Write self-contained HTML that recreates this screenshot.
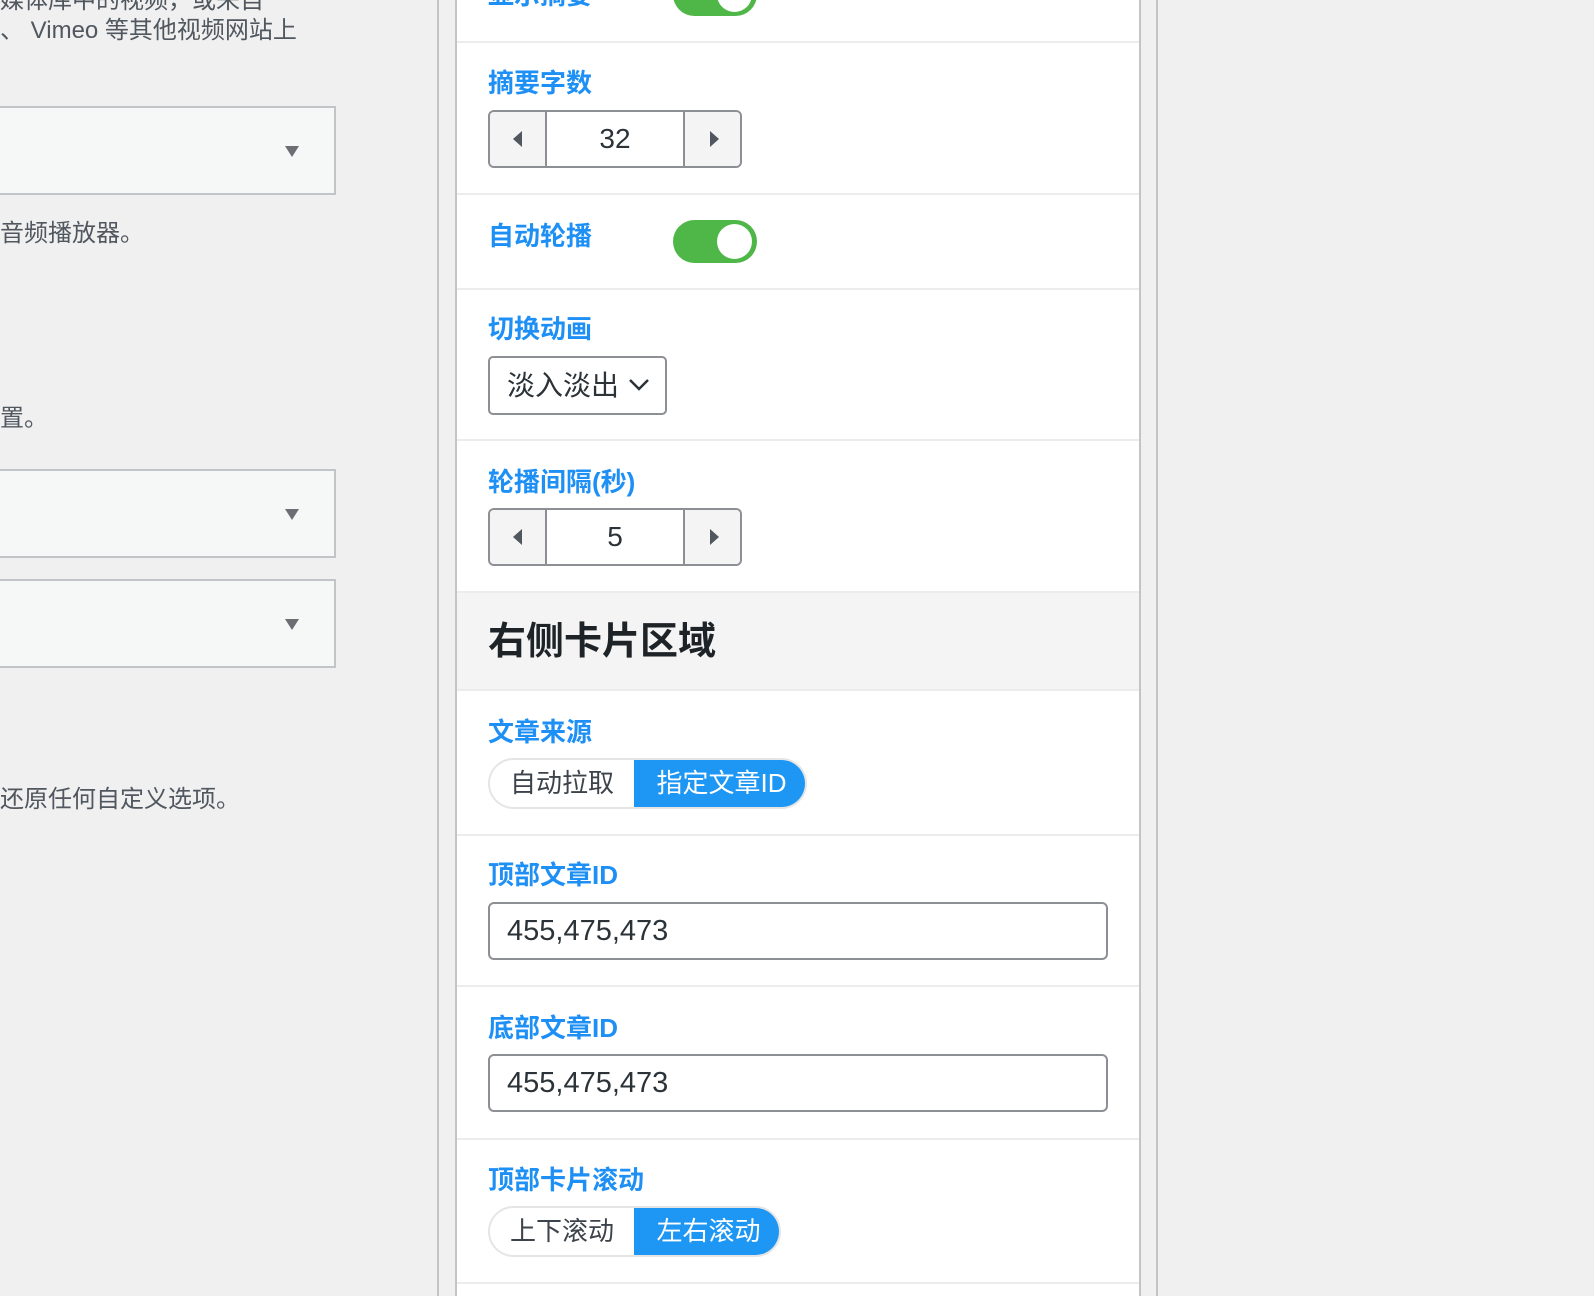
<!DOCTYPE html>
<html><head><meta charset="utf-8">
<style>
*{box-sizing:border-box;margin:0;padding:0}
body{width:1594px;height:1296px;overflow:hidden;background:#f0f0f1;position:relative;font-family:"Liberation Sans","Noto Sans CJK SC",sans-serif}
.a{position:absolute}
.lt{position:absolute;left:0;color:#50575e;font-size:24px;white-space:nowrap;line-height:30px}
.sel{position:absolute;left:-5px;width:341px;background:#f6f7f7;border:2px solid #c3c4c7}
.sel:after{content:"";position:absolute;left:288px;top:50%;margin-top:-5px;border-left:7px solid transparent;border-right:7px solid transparent;border-top:11px solid #6b6f73}
.lbl{position:absolute;left:488px;color:#1e90f5;font-size:26px;font-weight:bold;line-height:30px;white-space:nowrap}
.hr{position:absolute;left:457px;width:682px;height:2px;background:#ececec}
.num{position:absolute;left:488px;width:254px;height:58px;border:2px solid #8c8f94;border-radius:6px;overflow:hidden;background:#fff}
.num .b{position:absolute;top:0;width:57px;height:100%;background:#f4f4f4}
.num .l{left:0;border-right:2px solid #8c8f94}
.num .r{right:0;border-left:2px solid #8c8f94}
.num .v{position:absolute;left:57px;right:57px;top:0;height:100%;text-align:center;line-height:54px;font-size:28px;color:#2c3338}
.tl{position:absolute;top:50%;margin-top:-8px;border-top:8px solid transparent;border-bottom:8px solid transparent}
.tog{position:absolute;left:673px;width:84px;height:43px;border-radius:22px;background:#4fb748}
.tog:after{content:"";position:absolute;right:5px;top:4px;width:35px;height:35px;border-radius:50%;background:#fff}
.seg{position:absolute;left:488px;height:51px;border-radius:26px;border:2px solid #e5e5e5;overflow:hidden;font-size:26px;line-height:47px;white-space:nowrap}
.seg span{position:absolute;top:-2px;height:51px;line-height:51px;text-align:center}
.inp{position:absolute;left:488px;width:620px;height:58px;border:2px solid #8c8f94;border-radius:6px;background:#fff;font-size:29px;color:#2c3338;line-height:54px;padding-left:17px}
</style></head><body>
<div class="lt" style="top:-14px">媒体库中的视频，或来自</div>
<div class="lt" style="top:16px">、 Vimeo 等其他视频网站上</div>
<div class="sel" style="top:106px;height:89px"></div>
<div class="lt" style="top:219px">音频播放器。</div>
<div class="lt" style="top:404px">置。</div>
<div class="sel" style="top:469px;height:89px"></div>
<div class="sel" style="top:579px;height:89px"></div>
<div class="lt" style="top:785px">还原任何自定义选项。</div>

<div class="a" style="left:437px;top:0;width:2px;height:1296px;background:#c3c4c7"></div>
<div class="a" style="left:1156px;top:0;width:2px;height:1296px;background:#c3c4c7"></div>
<div class="a" style="left:455px;top:0;width:686px;height:1296px;background:#fff;border-left:2px solid #c3c4c7;border-right:2px solid #c3c4c7"></div>

<div class="lbl" style="top:-20px">显示摘要</div>
<div class="tog" style="top:-27px"></div>
<div class="hr" style="top:41px"></div>

<div class="lbl" style="top:68px">摘要字数</div>
<div class="num" style="top:110px"><div class="b l"><div class="tl" style="left:23px;border-right:9px solid #50575e"></div></div><div class="v">32</div><div class="b r"><div class="tl" style="left:25px;border-left:9px solid #50575e"></div></div></div>
<div class="hr" style="top:193px"></div>

<div class="lbl" style="top:221px">自动轮播</div>
<div class="tog" style="top:220px"></div>
<div class="hr" style="top:288px"></div>

<div class="lbl" style="top:314px">切换动画</div>
<div class="a" style="left:488px;top:356px;width:179px;height:59px;border:2px solid #8c8f94;border-radius:5px;font-size:28px;line-height:55px;padding-left:17px;color:#2c3338;white-space:nowrap">淡入淡出
<svg class="a" style="left:138px;top:20px" width="22" height="14" viewBox="0 0 22 14"><path d="M2 2 L11 11 L20 2" fill="none" stroke="#2c3338" stroke-width="2.5"/></svg></div>
<div class="hr" style="top:439px"></div>

<div class="lbl" style="top:467px">轮播间隔(秒)</div>
<div class="num" style="top:508px"><div class="b l"><div class="tl" style="left:23px;border-right:9px solid #50575e"></div></div><div class="v">5</div><div class="b r"><div class="tl" style="left:25px;border-left:9px solid #50575e"></div></div></div>

<div class="a" style="left:457px;top:591px;width:682px;height:100px;background:#f4f4f4;border-top:2px solid #ececec;border-bottom:2px solid #ececec"></div>
<div class="a" style="left:488px;top:620px;font-size:38px;font-weight:bold;color:#1d2327;line-height:44px;white-space:nowrap">右侧卡片区域</div>

<div class="lbl" style="top:717px">文章来源</div>
<div class="seg" style="top:758px;width:319px"><span style="left:0;width:144px;color:#3c434a">自动拉取</span><span style="left:144px;width:175px;background:#1e96f3;color:#fff">指定文章ID</span></div>
<div class="hr" style="top:834px"></div>

<div class="lbl" style="top:860px">顶部文章ID</div>
<div class="inp" style="top:902px">455,475,473</div>
<div class="hr" style="top:985px"></div>

<div class="lbl" style="top:1013px">底部文章ID</div>
<div class="inp" style="top:1054px">455,475,473</div>
<div class="hr" style="top:1138px"></div>

<div class="lbl" style="top:1165px">顶部卡片滚动</div>
<div class="seg" style="top:1206px;width:293px"><span style="left:0;width:144px;color:#3c434a">上下滚动</span><span style="left:144px;width:149px;background:#1e96f3;color:#fff">左右滚动</span></div>
<div class="hr" style="top:1282px"></div>
</body></html>
